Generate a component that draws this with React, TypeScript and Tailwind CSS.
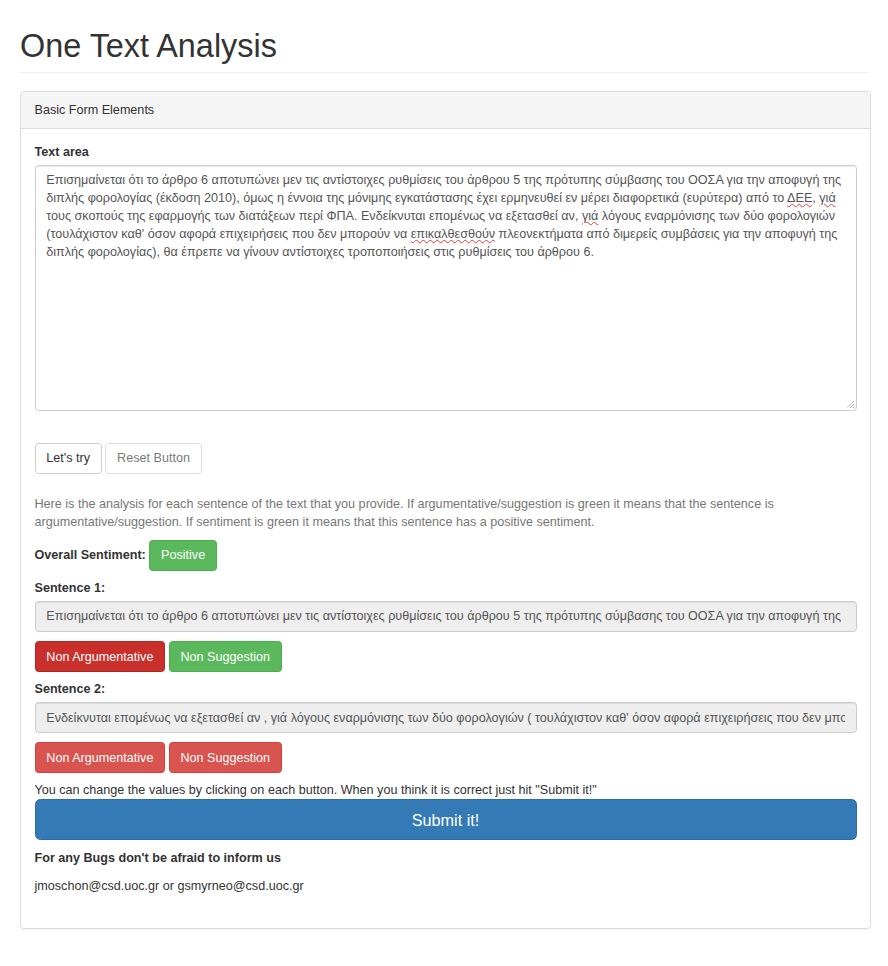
import React from 'react';

const lines: React.ReactNode[] = [
  <>Επισημαίνεται ότι το άρθρο 6 αποτυπώνει μεν τις αντίστοιχες ρυθμίσεις του άρθρου 5 της πρότυπης σύμβασης του ΟΟΣΑ για την αποφυγή της</>,
  <>
    διπλής φορολογίας (έκδοση 2010), όμως η έννοια της μόνιμης εγκατάστασης έχει ερμηνευθεί εν μέρει διαφορετικά (ευρύτερα) από το{' '}
    <Typo>ΔΕΕ</Typo>, <Typo>γιά</Typo>
  </>,
  <>
    τους σκοπούς της εφαρμογής των διατάξεων περί ΦΠΑ. Ενδείκνυται επομένως να εξετασθεί αν, <Typo>γιά</Typo> λόγους εναρμόνισης των δύο φορολογιών
  </>,
  <>
    (τουλάχιστον καθ' όσον αφορά επιχειρήσεις που δεν μπορούν να <Typo>επικαλθεσθούν</Typo> πλεονεκτήματα από διμερείς συμβάσεις για την αποφυγή της
  </>,
  <>διπλής φορολογίας), θα έπρεπε να γίνουν αντίστοιχες τροποποιήσεις στις ρυθμίσεις του άρθρου 6.</>,
];

function Typo({ children }: { children: React.ReactNode }) {
  return (
    <span className="underline decoration-wavy decoration-[#e53935] decoration-[0.5px] underline-offset-[1px]">{children}</span>
  );
}

const btn = 'inline-flex items-center justify-center h-[30.6px] px-[10.8px] border rounded-[3.6px] text-[12.6px] leading-[18px]';

function Sentence({
  n,
  text,
  argClass,
  sugClass,
}: {
  n: number;
  text: string;
  argClass: string;
  sugClass: string;
}) {
  return (
    <div>
      <div className="font-bold text-[#333] leading-[18px] mt-[8px] mb-[4.5px]">Sentence {n}:</div>
      <input
        readOnly
        value={text}
        className="block w-full h-[30.6px] px-[10.8px] bg-[#eee] border border-[#ccc] rounded-[3.6px] text-[12.6px] text-[#555] shadow-[inset_0_1px_1px_rgba(0,0,0,0.075)] outline-none"
        style={{ fontFamily: '"Liberation Sans", Arial, sans-serif' }}
      />
      <div className="flex gap-[3.5px] mt-[9.5px]">
        <button className={`${btn} text-white ${argClass}`}>Non Argumentative</button>
        <button className={`${btn} text-white ${sugClass}`}>Non Suggestion</button>
      </div>
    </div>
  );
}

export default function App() {
  return (
    <div
      className="bg-white min-h-[966px] px-[20px] pt-[1px] text-[#333] text-[12.6px] leading-[18px]"
      style={{ fontFamily: '"Liberation Sans", Arial, sans-serif' }}
    >
      <div className="mt-[25px] pb-[6px] border-b border-[#eee] mb-[18px]">
        <h1 className="text-[32.4px] leading-[40px] font-medium text-[#333]">One Text Analysis</h1>
      </div>

      <div className="border border-[#ddd] rounded-[3.6px] shadow-[0_1px_1px_rgba(0,0,0,0.05)] w-[851px]">
        <div className="bg-[#f5f5f5] border-b border-[#ddd] px-[13.5px] py-[9px] rounded-t-[3.6px]">Basic Form Elements</div>

        <div className="px-[13.5px] pt-[13.5px] pb-[33px]">
          <div className="font-bold mb-[4.5px]">Text area</div>
          <div className="relative h-[246px] border border-[#ccc] rounded-[3.6px] px-[10.8px] py-[5.4px] text-[#555] shadow-[inset_0_1px_1px_rgba(0,0,0,0.075)]">
            {lines.map((l, i) => (
              <div key={i} className="whitespace-nowrap">
                {l}
              </div>
            ))}
            <svg className="absolute right-[1px] bottom-[1px]" width="9" height="9" viewBox="0 0 9 9">
              <path d="M8 1 L1 8 M8 4 L4 8 M8 7 L7 8" stroke="#888" strokeWidth="1" strokeDasharray="1 1" />
            </svg>
          </div>

          <div className="flex gap-[3.5px] mt-[32px]">
            <button className={`${btn} bg-white border-[#ccc] text-[#333]`}>Let's try</button>
            <button className={`${btn} bg-white border-[#ccc] text-[#333] opacity-65`}>Reset Button</button>
          </div>

          <p className="text-[#777] mt-[21.5px] mb-[9px]">
            Here is the analysis for each sentence of the text that you provide. If argumentative/suggestion is green it means that the sentence is
            argumentative/suggestion. If sentiment is green it means that this sentence has a positive sentiment.
          </p>

          <div className="flex items-center gap-[3.5px]">
            <span className="font-bold">Overall Sentiment:</span>
            <button className={`${btn} text-white bg-[#5cb85c] border-[#4cae4c]`}>Positive</button>
          </div>

          <Sentence
            n={1}
            text="Επισημαίνεται ότι το άρθρο 6 αποτυπώνει μεν τις αντίστοιχες ρυθμίσεις του άρθρου 5 της πρότυπης σύμβασης του ΟΟΣΑ για την αποφυγή της διπλής φορολογίας (έκδοση 2010), όμως η έννοια της μόνιμης εγκατάστασης έχει ερμηνευθεί εν μέρει διαφορετικά"
            argClass="bg-[#c9302c] border-[#ac2925]"
            sugClass="bg-[#5cb85c] border-[#4cae4c]"
          />
          <Sentence
            n={2}
            text="Ενδείκνυται επομένως να εξετασθεί αν , γιά λόγους εναρμόνισης των δύο φορολογιών ( τουλάχιστον καθ' όσον αφορά επιχειρήσεις που δεν μπορούν να επικαλθεσθούν πλεονεκτήματα"
            argClass="bg-[#d9534f] border-[#d43f3a]"
            sugClass="bg-[#d9534f] border-[#d43f3a]"
          />

          <div className="mt-[8px]">You can change the values by clicking on each button. When you think it is correct just hit "Submit it!"</div>
          <button className="block w-full h-[41px] bg-[#337ab7] border border-[#2e6da4] rounded-[5.4px] text-white text-[16.2px]">
            Submit it!
          </button>

          <div className="font-bold mt-[9px]">For any Bugs don't be afraid to inform us</div>
          <p className="mt-[10px]">jmoschon@csd.uoc.gr or gsmyrneo@csd.uoc.gr</p>
        </div>
      </div>
    </div>
  );
}
